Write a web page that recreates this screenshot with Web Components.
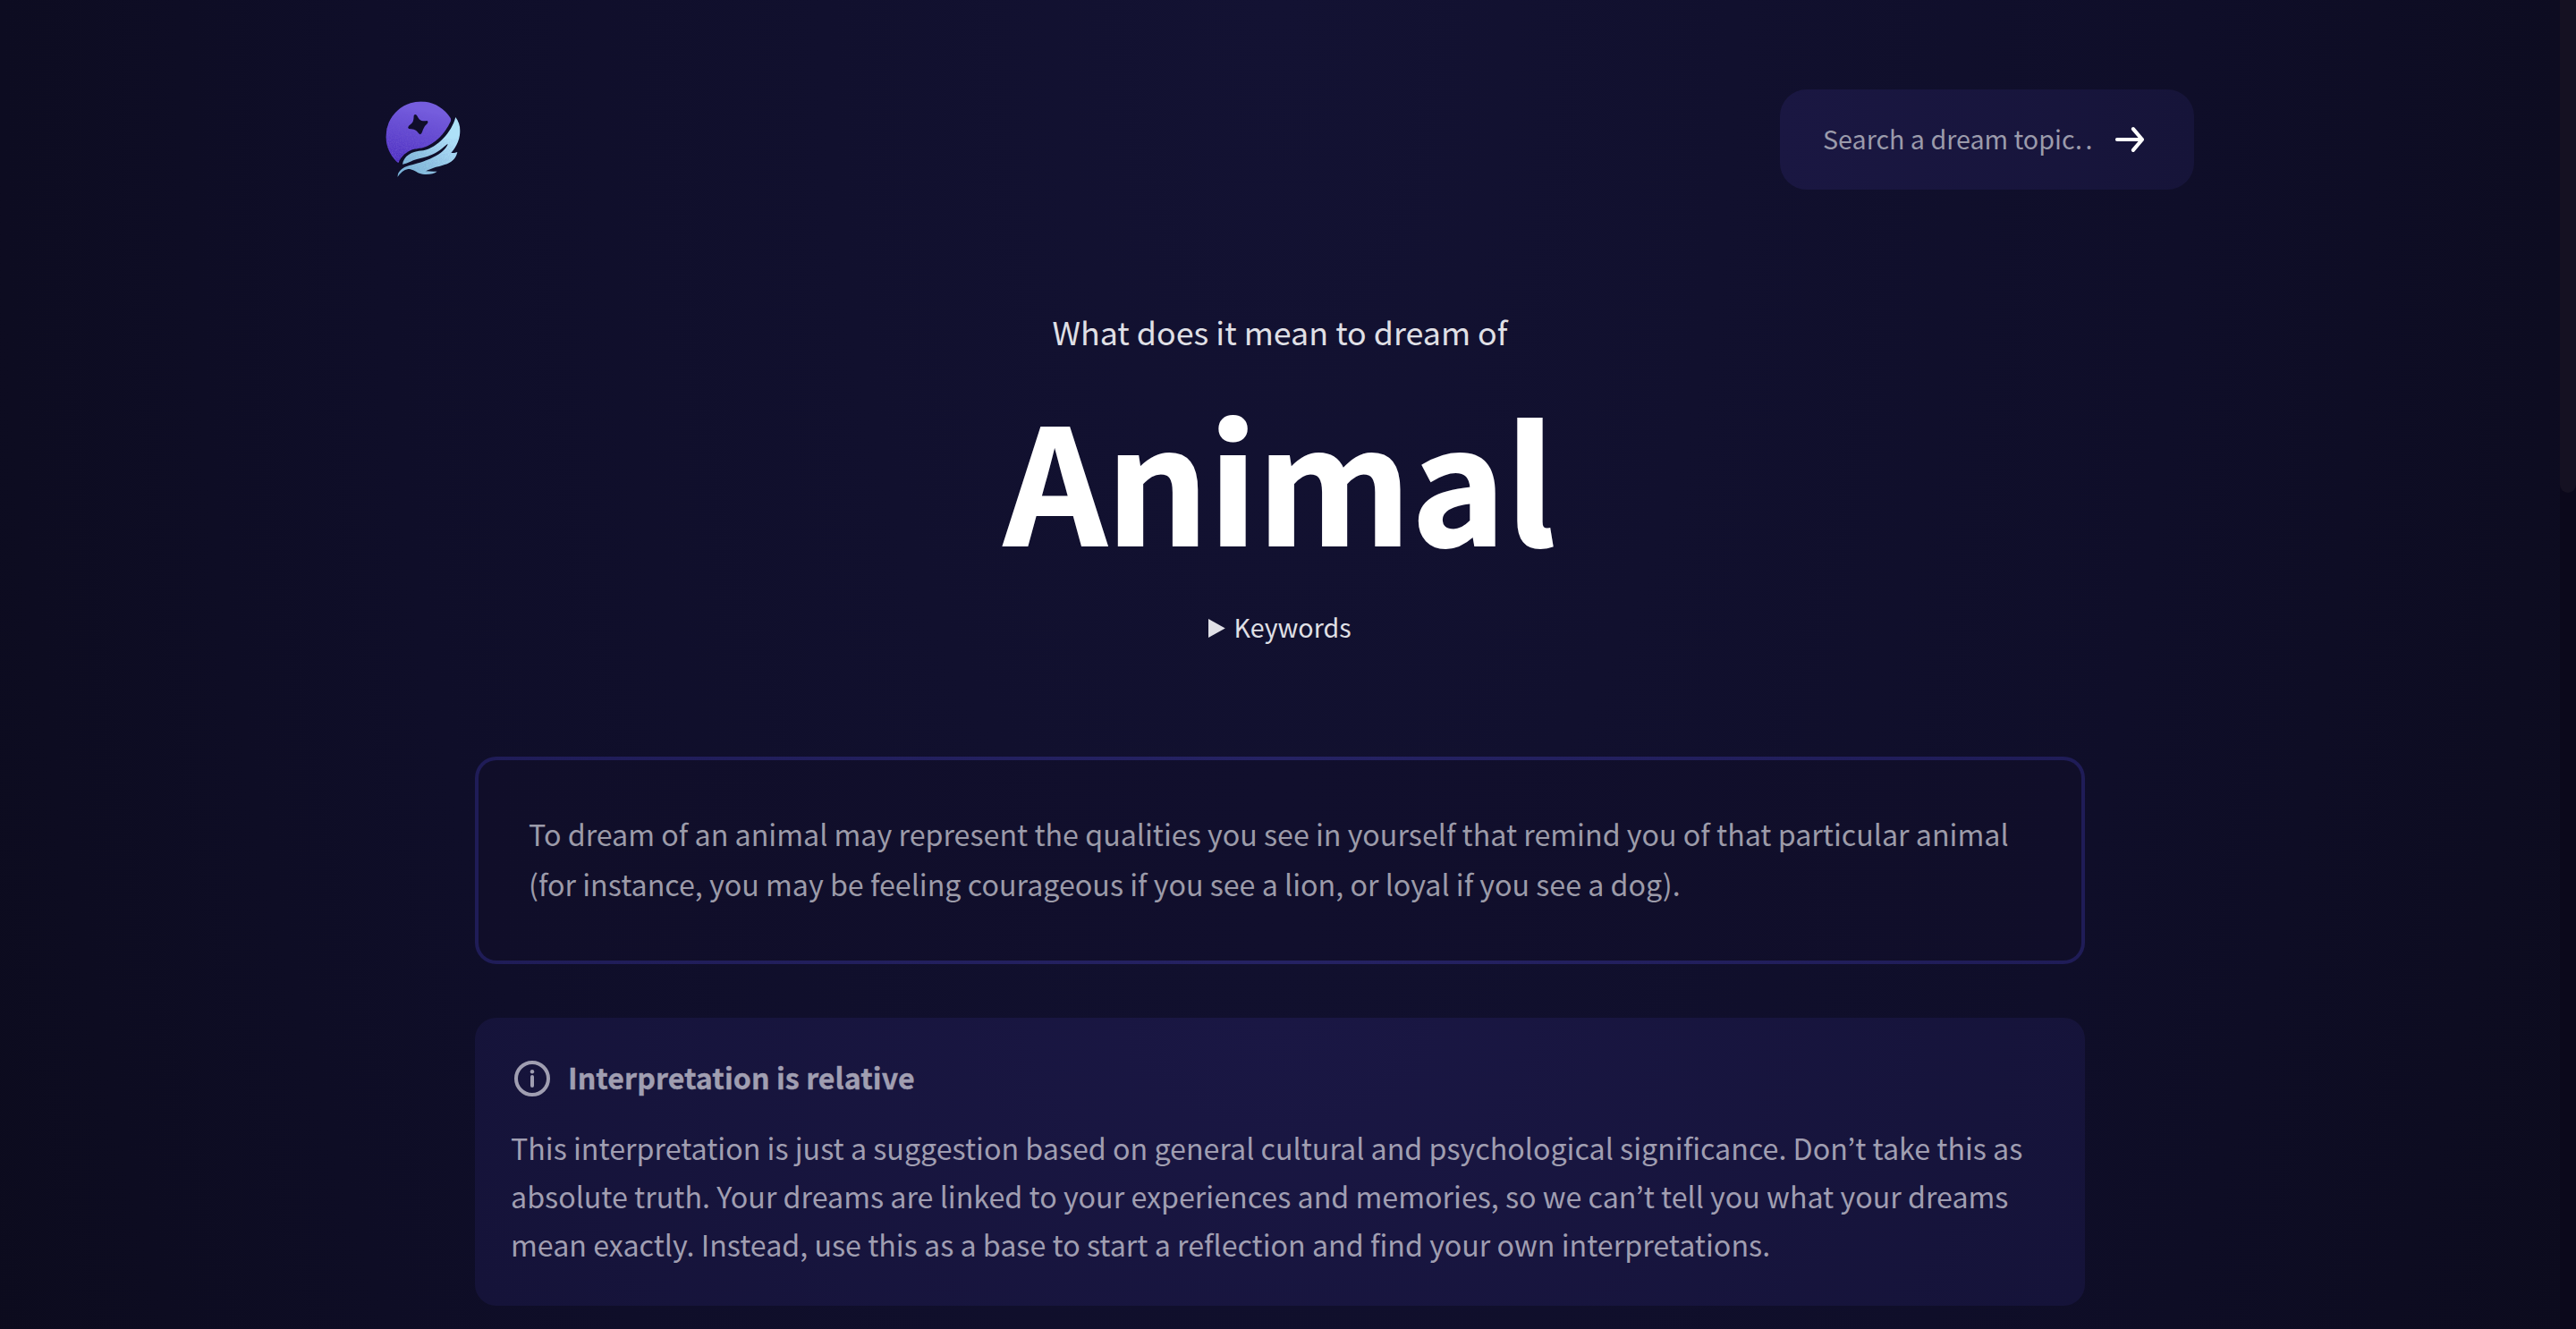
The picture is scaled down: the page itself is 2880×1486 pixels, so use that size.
<!DOCTYPE html>
<html lang="en">
<head>
<meta charset="utf-8">
<title>Animal – dream meaning</title>
<style>
html,body{margin:0;height:100%;overflow:hidden;background:#0b0a1b}
body{font-family:"Noto Sans CJK KR","Noto Sans",sans-serif;color:#e0e0e6}
</style>
</head>
<body>
<dream-page>
  <dream-header slot="header">
    <dream-logo></dream-logo>
    <dream-search>Search a dream topic</dream-search>
  </dream-header>
  <dream-hero>
    <span slot="eyebrow">What does it mean to dream of</span>
    <span slot="title">Animal</span>
    <dream-keywords slot="more">Keywords</dream-keywords>
  </dream-hero>
  <dream-meaning>To dream of an animal may represent the qualities you see in yourself that remind you of that particular animal<br>(for instance, you may be feeling courageous if you see a lion, or loyal if you see a dog).</dream-meaning>
  <dream-note><span slot="title">Interpretation is relative</span>This interpretation is just a suggestion based on general cultural and psychological significance. Don’t take this as<br>absolute truth. Your dreams are linked to your experiences and memories, so we can’t tell you what your dreams<br>mean exactly. Instead, use this as a base to start a reflection and find your own interpretations.</dream-note>
</dream-page>
<script>
const define = (name, html) => customElements.define(name, class extends HTMLElement {
  constructor() {
    super();
    this.attachShadow({ mode: 'open' }).innerHTML = html;
  }
});

define('dream-scrollbar', `
<style>
:host{display:block;width:18px;background:#0b081b}
div{height:551px;border-radius:0 0 9px 9px;background:#151122}
</style><div></div>`);

define('dream-page', `
<style>
:host{display:flex;height:1486px;overflow:hidden}
main{flex:1;display:flex;flex-direction:column;align-items:center;overflow:hidden;
  background:radial-gradient(1640px 3400px at 50% 0,#131233 0%,#0f0e29 62%,#0c0b1d 100%)}
</style>
<main><slot name="header"></slot><slot></slot></main><dream-scrollbar></dream-scrollbar>`);

define('dream-header', `
<style>
:host{display:flex;flex:none;box-sizing:border-box;width:2044px;height:212px;padding-top:100px;justify-content:space-between;align-items:center}
</style><slot></slot>`);

define('dream-logo', `
<style>
:host{display:block;width:130px;height:120px;margin:-2px 0 0 1px}
svg{display:block}
</style>
<svg width="130" height="120" viewBox="0 0 390 360">
<defs>
<linearGradient id="p" x1=".6" y1="0" x2=".35" y2="1"><stop offset=".15" stop-color="#755ddd"/><stop offset=".6" stop-color="#6045cf"/><stop offset="1" stop-color="#4a2bc0"/></linearGradient>
<linearGradient id="b" x1="1" y1="0" x2="0" y2="1"><stop offset=".3" stop-color="#aee1f8"/><stop offset=".65" stop-color="#8fc8e2"/><stop offset="1" stop-color="#72b2d2"/></linearGradient>
<linearGradient id="f" x1=".6" y1="0" x2=".4" y2="1"><stop offset=".25" stop-color="#fff" stop-opacity="0"/><stop offset=".7" stop-color="#fff"/></linearGradient>
<filter id="n" x="0" y="0" width="100%" height="100%"><feTurbulence type="fractalNoise" baseFrequency=".25" numOctaves="2" seed="4"/><feColorMatrix values="0 0 0 0 .2  0 0 0 0 .12  0 0 0 0 .66  2.2 0 0 0 -.7"/></filter>
<clipPath id="c"><path d="M106 262A117 117 0 1 1 279 108Q285 115 281 123C262 164 228 199 190 210C170 215 158 212 140 223C122 234 113 246 106 262Z"/></clipPath>
<clipPath id="w"><path d="M120 266C124 240 148 222 190 220C238 209 284 160 298 108C311 126 316 147 312 168C309 190 299 209 283 228Q294 229 304 225C299 248 284 263 253 270Q244 274 232 275C218 281 206 284 198 289Q218 291 236 290C223 300 195 303 176 296C162 290 154 282 139 282C124 284 113 296 103 309C104 290 119 277 143 270C178 262 205 253 232 238C255 225 269 210 272 197C262 203 246 222 218 234C200 243 184 245 168 249C147 255 138 263 120 266Z"/></clipPath>
<mask id="k"><rect width="390" height="360" fill="url(#f)"/></mask>
</defs>
<g clip-path="url(#c)"><rect x="60" y="50" width="230" height="220" fill="url(#p)"/><g mask="url(#k)" opacity=".6"><rect x="60" y="90" width="230" height="180" filter="url(#n)"/></g></g>
<path fill="#100e2a" d="M158 103Q162 95 168 102Q176 118 184 120Q193 122 202 120Q208 123 203 130Q191 140 189 149Q187 155 184 162Q179 169 174 162Q165 150 158 149Q150 147 141 147Q136 142 141 137Q152 130 155 123Q158 114 158 103Z"/>
<g clip-path="url(#w)"><rect x="100" y="100" width="220" height="212" fill="url(#b)"/><g mask="url(#k)" opacity=".18"><rect x="100" y="180" width="220" height="132" filter="url(#n)"/></g></g>
</svg>`);

define('dream-search', `
<style>
:host{display:flex;box-sizing:border-box;width:463px;height:112px;border-radius:30px;padding:0 50px 2px 48px;justify-content:space-between;align-items:center;
  background:linear-gradient(90deg,#1a1742,#161439);color:#9b9bab;font-size:28.66px;line-height:40px;white-space:nowrap}
.d{letter-spacing:3.5px;margin-left:.6px}
svg{display:block;margin:2px 4px 0 0}
</style>
<span><slot></slot><span class="d">..</span></span>
<svg width="36" height="32" viewBox="0 0 36 32" fill="none" stroke="#fff" stroke-width="4.2" stroke-linecap="round" stroke-linejoin="round"><path d="M4 16H32M21.9 4.2L32 16L21.9 27.8"/></svg>`);

define('dream-hero', `
<style>
:host{display:flex;flex:none;flex-direction:column;align-items:center;padding-top:132px}
p,h1{margin:0;white-space:nowrap}
p{font-size:35.8px;line-height:52px}
h1{margin:36px 0 49px;font-size:178.6px;line-height:200px;font-weight:700;color:#fff;-webkit-text-stroke:2px #fff}
</style>
<p><slot name="eyebrow"></slot></p><h1><slot name="title"></slot></h1><slot name="more"></slot>`);

define('dream-keywords', `
<style>
:host{display:flex;align-items:center;gap:9px;height:40px;font-size:28.58px;line-height:40px}
svg{display:block;margin-top:3px}
</style>
<svg width="19" height="21" viewBox="0 0 19 21"><path fill="#e0e0e6" d="M0 0L18.8 10.5L0 21Z"/></svg><span><slot></slot></span>`);

define('dream-meaning', `
<style>
:host{display:block;flex:none;box-sizing:border-box;width:1800px;height:232px;margin-top:125px;border-radius:24px;
  background:linear-gradient(90deg,#100e29,#110f2d 50%,#100e29) padding-box,linear-gradient(90deg,#1f1c57,#252263 50%,#1f1c57) border-box;
  border:4px solid transparent;padding:54px 56px;color:#9c9ba9;font-size:32.22px;line-height:56px;white-space:nowrap}
</style><slot></slot>`);

define('dream-note', `
<style>
:host{display:block;flex:none;box-sizing:border-box;width:1800px;height:322px;margin-top:60px;padding:42px 40px;border-radius:24px;
  background:radial-gradient(1000px 700px at 50% 0,#1a1744,#151339);color:#a09eb1;font-size:32.22px;line-height:54px;white-space:nowrap}
header{display:flex;align-items:center;gap:16px;height:48px;margin-bottom:28px}
h2{margin:0;font-size:32.15px;line-height:48px;font-weight:700;letter-spacing:.07px;-webkit-text-stroke:.4px #a09eb1}
svg{display:block;margin-top:4px}
</style>
<header><svg width="48" height="48" viewBox="0 0 48 48" fill="none" stroke="#a09eb1" stroke-width="4" stroke-linecap="round"><circle cx="24" cy="24" r="18"/><path d="M24 22V32"/><circle cx="24" cy="16.2" r="2.2" fill="#a09eb1" stroke="none"/></svg><h2><slot name="title"></slot></h2></header>
<slot></slot>`);
</script>
</body>
</html>
